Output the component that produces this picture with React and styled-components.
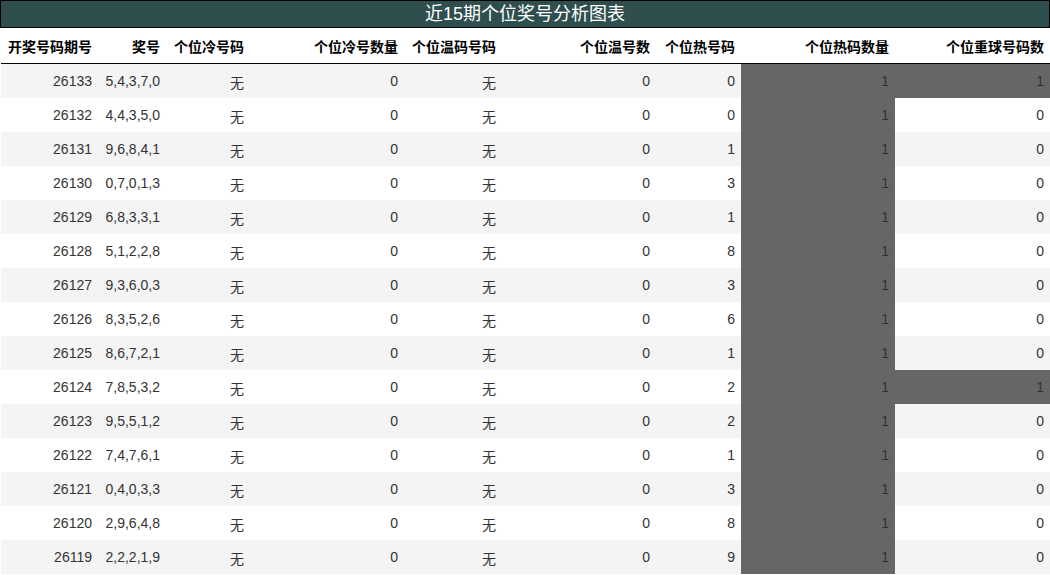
import React from "react";
import styled, { createGlobalStyle } from "styled-components";

const Global = createGlobalStyle`
  body { margin: 0; background: #fff; font-family: "Liberation Sans", "Noto Sans CJK SC", sans-serif; }
`;

const Wrap = styled.div` width: 1050px; `;
const Title = styled.div`
  background: #2f4f4f; border: 1px solid #000; box-sizing: border-box;
  height: 28px; color: #fff; font-size: 18px; text-align: center; line-height: 26px;
`;
const Table = styled.table`
  width: 1049px; margin-left: 1px; border-collapse: collapse; table-layout: fixed;
`;
const Th = styled.th`
  height: 35px; font-size: 14px; font-weight: bold; color: #000; padding: 0 6px 0 0;
  text-align: ${p => (p.$left ? "left" : "right")};
  padding-left: ${p => (p.$left ? "7px" : "0")};
  border-bottom: 1px solid #000;
`;
const Tr = styled.tr` background: ${p => (p.$odd ? "#f4f4f4" : "#fff")}; `;
const Td = styled.td`
  height: 34px; box-sizing: border-box; padding: 0 6px 0 0; font-size: 14px; line-height: 16px;
  color: #333; text-align: right;
  background: ${p => (p.$hot ? "#666" : "transparent")};
`;
const Han = styled.span` position: relative; top: 2px; `;

const rows = [
  ["26133","5,4,3,7,0",0,1],["26132","4,4,3,5,0",0,0],["26131","9,6,8,4,1",1,0],
  ["26130","0,7,0,1,3",3,0],["26129","6,8,3,3,1",1,0],["26128","5,1,2,2,8",8,0],
  ["26127","9,3,6,0,3",3,0],["26126","8,3,5,2,6",6,0],["26125","8,6,7,2,1",1,0],
  ["26124","7,8,5,3,2",2,1],["26123","9,5,5,1,2",2,0],["26122","7,4,7,6,1",1,0],
  ["26121","0,4,0,3,3",3,0],["26120","2,9,6,4,8",8,0],["26119","2,2,2,1,9",9,0],
];
const widths = [97, 68, 84, 154, 98, 154, 85, 154, 155];
const heads = ["开奖号码期号","奖号","个位冷号码","个位冷号数量","个位温码号码","个位温号数","个位热号码","个位热码数量","个位重球号码数"];

export default function App() {
  return (
    <Wrap>
      <Global />
      <Title>近15期个位奖号分析图表</Title>
      <Table>
        <colgroup>{widths.map((w, i) => <col key={i} style={{ width: w }} />)}</colgroup>
        <thead><tr>{heads.map((h, i) => <Th key={i} $left={i === 0}>{h}</Th>)}</tr></thead>
        <tbody>
          {rows.map((r, i) => (
            <Tr key={r[0]} $odd={i % 2 === 0}>
              <Td>{r[0]}</Td>
              <Td>{r[1]}</Td>
              <Td><Han>无</Han></Td>
              <Td>0</Td>
              <Td><Han>无</Han></Td>
              <Td>0</Td>
              <Td>{r[2]}</Td>
              <Td $hot>1</Td>
              <Td $hot={r[3] === 1}>{r[3]}</Td>
            </Tr>
          ))}
        </tbody>
      </Table>
    </Wrap>
  );
}
